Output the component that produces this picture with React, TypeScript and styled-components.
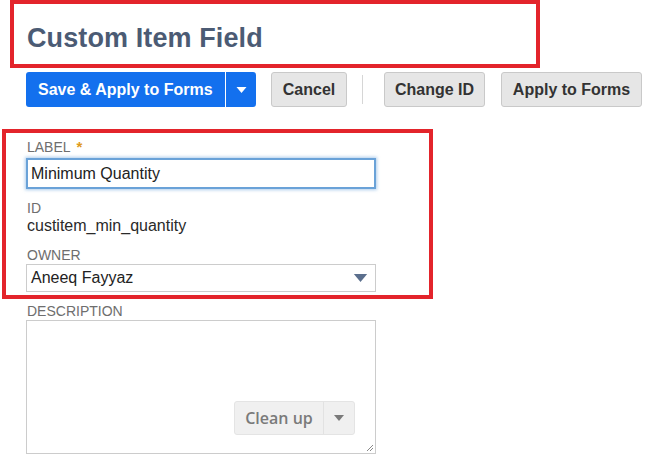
import React from "react";
import styled, { createGlobalStyle } from "styled-components";

const GlobalStyle = createGlobalStyle`
  html, body {
    margin: 0;
    padding: 0;
    background: #ffffff;
    font-family: "Liberation Sans", Arial, sans-serif;
    overflow: hidden;
  }
  * {
    box-sizing: border-box;
  }
`;

const Page = styled.div`
  width: 652px;
  height: 456px;
  overflow: hidden;
  display: flex;
  flex-direction: column;
`;

const HighlightBox = styled.div<{ $left: number; $width: number }>`
  margin-left: ${(p) => p.$left}px;
  width: ${(p) => p.$width}px;
  border: 4px solid #e3242b;
`;

const Header = styled(HighlightBox)`
  height: 68px;
  display: flex;
  align-items: center;
  padding-left: 13px;
  padding-top: 8px;
`;

const Title = styled.h1`
  margin: 0;
  font-size: 27px;
  font-weight: 700;
  color: #4b5b74;
  letter-spacing: 0.1px;
`;

const Toolbar = styled.div`
  display: flex;
  align-items: center;
  margin-top: 4px;
  padding-left: 26px;
  height: 35px;
`;

const SplitPrimary = styled.div`
  display: flex;
  height: 35px;
  border-radius: 3px;
  overflow: hidden;
  background: #1370ee;
`;

const PrimaryMain = styled.button`
  border: none;
  background: transparent;
  color: #ffffff;
  font-family: inherit;
  font-size: 16px;
  font-weight: 700;
  padding: 0 11px 0 12px;
  height: 100%;
  width: 199px;
  text-align: left;
`;

const PrimaryArrow = styled.button`
  border: none;
  border-left: 1px solid #ffffff;
  background: transparent;
  width: 31px;
  height: 100%;
  display: flex;
  align-items: center;
  justify-content: center;
  padding: 0;
`;

const GrayButton = styled.button<{ $width: number; $gap: number }>`
  margin-left: ${(p) => p.$gap}px;
  width: ${(p) => p.$width}px;
  height: 35px;
  background: #e6e6e6;
  border: 1px solid #c9c9c9;
  border-radius: 3px;
  color: #333333;
  font-family: inherit;
  font-size: 16px;
  font-weight: 700;
  padding: 0;
`;

const Separator = styled.div`
  width: 1px;
  height: 29px;
  background: #d6d6d6;
  margin-left: 15px;
`;

const Fields = styled(HighlightBox)`
  margin-top: 22px;
  height: 170px;
  padding: 6px 0 0 20px;
  display: flex;
  flex-direction: column;
`;

const FieldLabel = styled.div<{ $top?: number }>`
  margin-top: ${(p) => p.$top ?? 0}px;
  font-size: 14px;
  line-height: 16px;
  color: #6e6e6e;
  text-transform: uppercase;
  padding-left: 1px;
`;

const Required = styled.span`
  color: #e09a1a;
  font-weight: 700;
  margin-left: 6px;
  font-size: 15px;
`;

const TextInput = styled.div`
  margin-top: 3px;
  width: 350px;
  height: 31px;
  border: 2px solid #6aa2d8;
  box-shadow: 0 0 3px 1px rgba(110, 165, 220, 0.55);
  display: flex;
  align-items: center;
  padding-left: 3px;
  font-size: 16px;
  color: #222222;
`;

const StaticValue = styled.div`
  margin-top: 1px;
  font-size: 16px;
  line-height: 18px;
  color: #2a2a2a;
  padding-left: 1px;
`;

const Select = styled.div`
  margin-top: 1px;
  width: 350px;
  height: 28px;
  border: 1px solid #cccccc;
  display: flex;
  align-items: center;
  justify-content: space-between;
  padding: 0 7px 0 4px;
  font-size: 16px;
  color: #222222;
`;

const Description = styled.div`
  margin-top: 4px;
  padding-left: 26px;
  display: flex;
  flex-direction: column;
`;

const TextArea = styled.div`
  position: relative;
  margin-top: 1px;
  width: 350px;
  height: 134px;
  border: 1px solid #cccccc;
  display: flex;
  align-items: flex-end;
  justify-content: flex-end;
  padding: 0 20px 18px 0;
`;

const CleanUp = styled.div`
  display: flex;
  height: 34px;
  background: #f0f0f0;
  border: 1px solid #e4e4e4;
  border-radius: 3px;
  font-family: "Open Sans", "Noto Sans", sans-serif;
  font-size: 16px;
  font-weight: 600;
  color: #7a7a7a;
  white-space: nowrap;
`;

const CleanUpLabel = styled.div`
  display: flex;
  align-items: center;
  justify-content: center;
  width: 89px;
  border-right: 1px solid #e2e2e2;
`;

const CleanUpArrow = styled.div`
  width: 30px;
  display: flex;
  align-items: center;
  justify-content: center;
`;

const ResizeGrip = styled.svg`
  position: absolute;
  right: 1px;
  bottom: 1px;
`;

const Caret = ({ color, w, h }: { color: string; w: number; h: number }) => (
  <svg width={w} height={h} viewBox="0 0 10 6">
    <path d="M0 0 L10 0 L5 6 Z" fill={color} />
  </svg>
);

export default function App() {
  return (
    <>
      <GlobalStyle />
      <Page>
        <Header $left={10} $width={530}>
          <Title>Custom Item Field</Title>
        </Header>

        <Toolbar>
          <SplitPrimary>
            <PrimaryMain>Save &amp; Apply to Forms</PrimaryMain>
            <PrimaryArrow>
              <Caret color="#ffffff" w={11} h={6} />
            </PrimaryArrow>
          </SplitPrimary>
          <GrayButton $width={76} $gap={15}>Cancel</GrayButton>
          <Separator />
          <GrayButton $width={101} $gap={21}>Change ID</GrayButton>
          <GrayButton $width={141} $gap={16}>Apply to Forms</GrayButton>
        </Toolbar>

        <Fields $left={2} $width={431}>
          <FieldLabel>
            Label<Required>*</Required>
          </FieldLabel>
          <TextInput>Minimum Quantity</TextInput>
          <FieldLabel $top={11}>ID</FieldLabel>
          <StaticValue>custitem_min_quantity</StaticValue>
          <FieldLabel $top={12}>Owner</FieldLabel>
          <Select>
            Aneeq Fayyaz
            <Caret color="#5b6f8d" w={15} h={8} />
          </Select>
        </Fields>

        <Description>
          <FieldLabel>Description</FieldLabel>
          <TextArea>
            <CleanUp>
              <CleanUpLabel>Clean up</CleanUpLabel>
              <CleanUpArrow>
                <Caret color="#7a7a7a" w={10} h={6} />
              </CleanUpArrow>
            </CleanUp>
            <ResizeGrip width="8" height="8" viewBox="0 0 8 8">
              <path d="M7 1 L1 7 M7 4 L4 7" stroke="#888" strokeWidth="1" />
            </ResizeGrip>
          </TextArea>
        </Description>
      </Page>
    </>
  );
}
